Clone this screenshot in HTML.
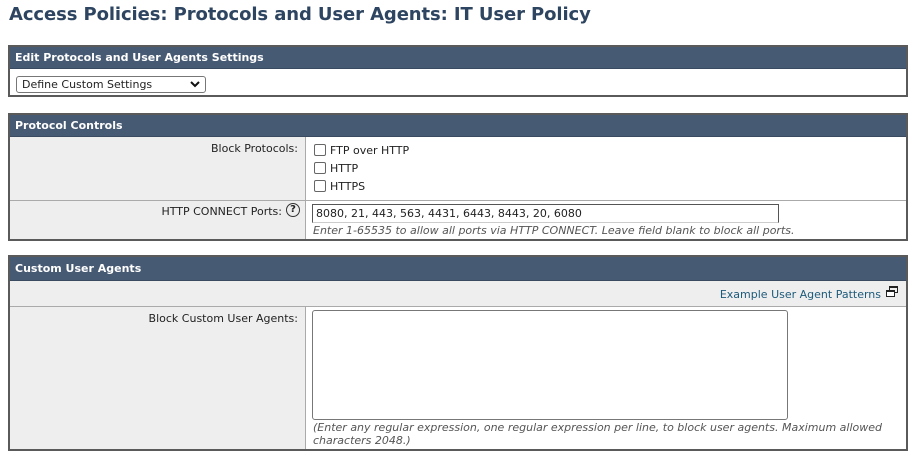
<!DOCTYPE html>
<html><head><meta charset="utf-8"><style>
*{box-sizing:border-box;margin:0;padding:0}
body{width:913px;height:457px;background:#fff;font-family:"DejaVu Sans","Liberation Sans",sans-serif;font-size:11px;color:#222;position:relative;overflow:hidden}
.a{position:absolute}
h1{position:absolute;left:9px;top:4px;font-size:18px;font-weight:bold;color:#2d4560;font-family:"DejaVu Sans",sans-serif;letter-spacing:-0.1px}
.box{position:absolute;left:8px;width:900px;border:2px solid #5a5a5a;background:#fff}
.hd{background:#475a74;color:#fff;font-weight:bold;font-size:11px;padding-left:5px;border-bottom:1px solid #3a4a60}
.lab{position:absolute;left:0;width:296px;background:#eee;text-align:right;padding-right:8px;border-right:1px solid #aaa}
.sep{position:absolute;left:0;right:0;height:1px;background:#aaa}
.cb{display:inline-block;width:12px;height:12px;border:1px solid #666;border-radius:2px;vertical-align:-2px;margin-right:4px;background:#fff}
.it{font-style:italic;color:#555;font-size:11px}
</style></head><body>
<h1>Access Policies: Protocols and User Agents: IT User Policy</h1>

<div class="box" style="top:45px;height:52px">
  <div class="hd" style="height:22px;line-height:22px">Edit Protocols and User Agents Settings</div>
  <div class="a" style="left:6px;top:29px;width:190px;height:17px;border:1px solid #777;border-radius:3px;line-height:15px;padding-left:5px;font-size:11px">Define Custom Settings
    <svg class="a" style="right:5px;top:4px" width="10" height="7" viewBox="0 0 10 7"><path d="M1 1 L5 5 L9 1" stroke="#111" stroke-width="2" fill="none"/></svg></div>
</div>

<div class="box" style="top:113px;height:128px">
  <div class="hd" style="height:22px;line-height:22px">Protocol Controls</div>
  <div class="lab" style="top:22px;height:102px"></div>
  <div class="a" style="left:0;width:288px;top:27px;text-align:right">Block Protocols:</div>
  <div class="a" style="left:304px;top:27px;line-height:18px">
    <div><span class="cb"></span>FTP over HTTP</div>
    <div><span class="cb"></span>HTTP</div>
    <div><span class="cb"></span>HTTPS</div>
  </div>
  <div class="sep" style="top:85px"></div>
  <div class="a" style="left:0;width:272px;top:90px;text-align:right">HTTP CONNECT Ports:</div>
  <div class="a" style="left:276px;top:88px;width:14px;height:14px;border:1px solid #333;border-radius:50%;text-align:center;line-height:12px;font-size:10px;font-weight:bold">?</div>
  <div class="a" style="left:302px;top:89px;width:467px;height:19px;border:1px solid #555;border-bottom-color:#ccc;padding-left:3px;line-height:17px">8080, 21, 443, 563, 4431, 6443, 8443, 20, 6080</div>
  <div class="a it" style="left:303px;top:109px">Enter 1-65535 to allow all ports via HTTP CONNECT. Leave field blank to block all ports.</div>
</div>

<div class="box" style="top:255px;height:196px">
  <div class="hd" style="height:24px;line-height:24px">Custom User Agents</div>
  <div class="a" style="left:0;right:0;top:24px;height:25px;background:#eee"></div>
  <div class="a" style="right:25px;top:31px;color:#1d5a7a">Example User Agent Patterns</div>
  <svg class="a" style="right:8px;top:29px" width="12" height="11" viewBox="0 0 12 11"><rect x="3.5" y="0.5" width="8" height="6" fill="none" stroke="#222"/><rect x="0.5" y="4.5" width="8" height="6" fill="#fff" stroke="#222"/><line x1="0.5" y1="5.5" x2="8.5" y2="5.5" stroke="#222"/><line x1="3.5" y1="1.5" x2="11.5" y2="1.5" stroke="#222"/></svg>
  <div class="sep" style="top:49px"></div>
  <div class="lab" style="top:50px;height:142px"></div>
  <div class="a" style="left:0;width:288px;top:55px;text-align:right">Block Custom User Agents:</div>
  <div class="a" style="left:302px;top:53px;width:476px;height:110px;border:1px solid #777;border-radius:3px"></div>
  <div class="a it" style="left:303px;top:164px;line-height:13px;width:590px">(Enter any regular expression, one regular expression per line, to block user agents. Maximum allowed characters 2048.)</div>
</div>
</body></html>
